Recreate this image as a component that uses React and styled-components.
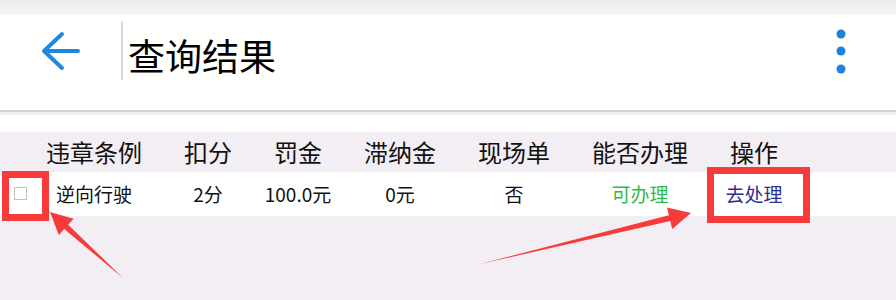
import React from 'react'
import styled, { createGlobalStyle } from 'styled-components'

const GlobalStyle = createGlobalStyle`
  html, body {
    margin: 0;
    padding: 0;
    background: #f2eef4;
    font-family: "Noto Sans CJK SC", "Noto Sans", sans-serif;
  }
`

const Page = styled.div`
  position: relative;
  width: 896px;
  min-height: 300px;
  background: #f2eef4;
  overflow: hidden;
`

const TopStrip = styled.div`
  height: 15px;
  background: linear-gradient(#ebebeb, #f7f7f7);
`

const Toolbar = styled.header`
  display: flex;
  align-items: flex-start;
  height: 95px;
  background: #fffffd;
  border-bottom: 2px solid #d2d2d2;
`

const BackButton = styled.button`
  display: flex;
  margin: 16px 0 0 40px;
  padding: 0;
  border: 0;
  background: none;
  width: 40px;
  height: 40px;
  cursor: pointer;
`

const Divider = styled.span`
  width: 2px;
  height: 59px;
  margin: 6px 0 0 41px;
  background: #d9d9d9;
`

const Title = styled.h1`
  margin: 22px 0 0 5px;
  font-size: 37px;
  line-height: 1;
  font-weight: 400;
  color: #000;
`

const MenuButton = styled.button`
  display: flex;
  margin: 14px 50px 0 auto;
  padding: 0;
  border: 0;
  background: none;
  width: 10px;
  height: 46px;
  cursor: pointer;
`

const Spacer = styled.div`
  height: 17px;
  margin-top: 3px;
  background: #fff;
`

const TableRow = styled.div`
  display: flex;
  align-items: center;
  height: ${p => (p.$head ? 40 : 44)}px;
  background: ${p => (p.$head ? '#f2eef4' : '#fff')};
  font-size: ${p => (p.$head ? 24 : 19)}px;
  color: #111;
`

const Lead = styled.div`
  display: flex;
  align-items: center;
  width: 46px;
  padding-left: 14px;
  box-sizing: border-box;
`

const Check = styled.input.attrs({ type: 'checkbox' })`
  appearance: none;
  margin: 0 0 1px;
  width: 13px;
  height: 13px;
  border: 1px solid #c3c3bb;
  background: #fff;
  box-sizing: border-box;
`

const Cells = styled.div`
  display: grid;
  grid-template-columns: 96px 48px 48px 72px 72px 96px 48px;
  column-gap: 42px;
`

const Cell = styled.div`
  display: flex;
  justify-content: center;
  white-space: nowrap;
  line-height: 1.2;
  color: ${p => p.$color || 'inherit'};
`

const Highlight = styled.div`
  position: absolute;
  left: ${p => p.$x}px;
  top: ${p => p.$y}px;
  width: ${p => p.$w}px;
  height: ${p => p.$h}px;
  border: 7px solid #f73b3b;
  box-sizing: border-box;
  pointer-events: none;
`

const Annotations = styled.svg`
  position: absolute;
  left: 0;
  top: 0;
  pointer-events: none;
`

const headers = ['违章条例', '扣分', '罚金', '滞纳金', '现场单', '能否办理', '操作']

const row = [
  { text: '逆向行驶' },
  { text: '2分' },
  { text: '100.0元' },
  { text: '0元' },
  { text: '否' },
  { text: '可办理', color: '#2fb94c' },
  { text: '去处理', color: '#2d2d94' },
]

export default function App() {
  return (
    <Page>
      <GlobalStyle />
      <TopStrip />
      <Toolbar>
        <BackButton aria-label="返回">
          <svg width="40" height="40" viewBox="0 0 40 40">
            <path
              d="M38 20 H4 M22 3 L4 20 L22 37"
              fill="none"
              stroke="#1e88dc"
              strokeWidth="4"
              strokeLinecap="round"
              strokeLinejoin="round"
            />
          </svg>
        </BackButton>
        <Divider />
        <Title>查询结果</Title>
        <MenuButton aria-label="更多">
          <svg width="10" height="46" viewBox="0 0 10 46">
            <circle cx="5" cy="5" r="4.5" fill="#1a84dc" />
            <circle cx="5" cy="22" r="4.5" fill="#1a84dc" />
            <circle cx="5" cy="40" r="4.5" fill="#1a84dc" />
          </svg>
        </MenuButton>
      </Toolbar>
      <Spacer />
      <TableRow $head>
        <Lead />
        <Cells>
          {headers.map(h => (
            <Cell key={h}>{h}</Cell>
          ))}
        </Cells>
      </TableRow>
      <TableRow>
        <Lead>
          <Check />
        </Lead>
        <Cells>
          {row.map(({ text, color }) => (
            <Cell key={text} $color={color}>
              {text}
            </Cell>
          ))}
        </Cells>
      </TableRow>

      <Highlight $x={2} $y={171} $w={47} $h={50} />
      <Highlight $x={707} $y={167} $w={103} $h={56} />
      <Annotations width="896" height="300" viewBox="0 0 896 300">
        <polygon points="50,212 73.6,218.8 68.2,224.7 123,278 64.2,229.1 58.8,235" fill="#f73b3b" />
        <polygon points="691,213 672.2,228.9 670.3,221.1 480,264 668.9,215.3 667,207.5" fill="#f73b3b" />
      </Annotations>
    </Page>
  )
}
